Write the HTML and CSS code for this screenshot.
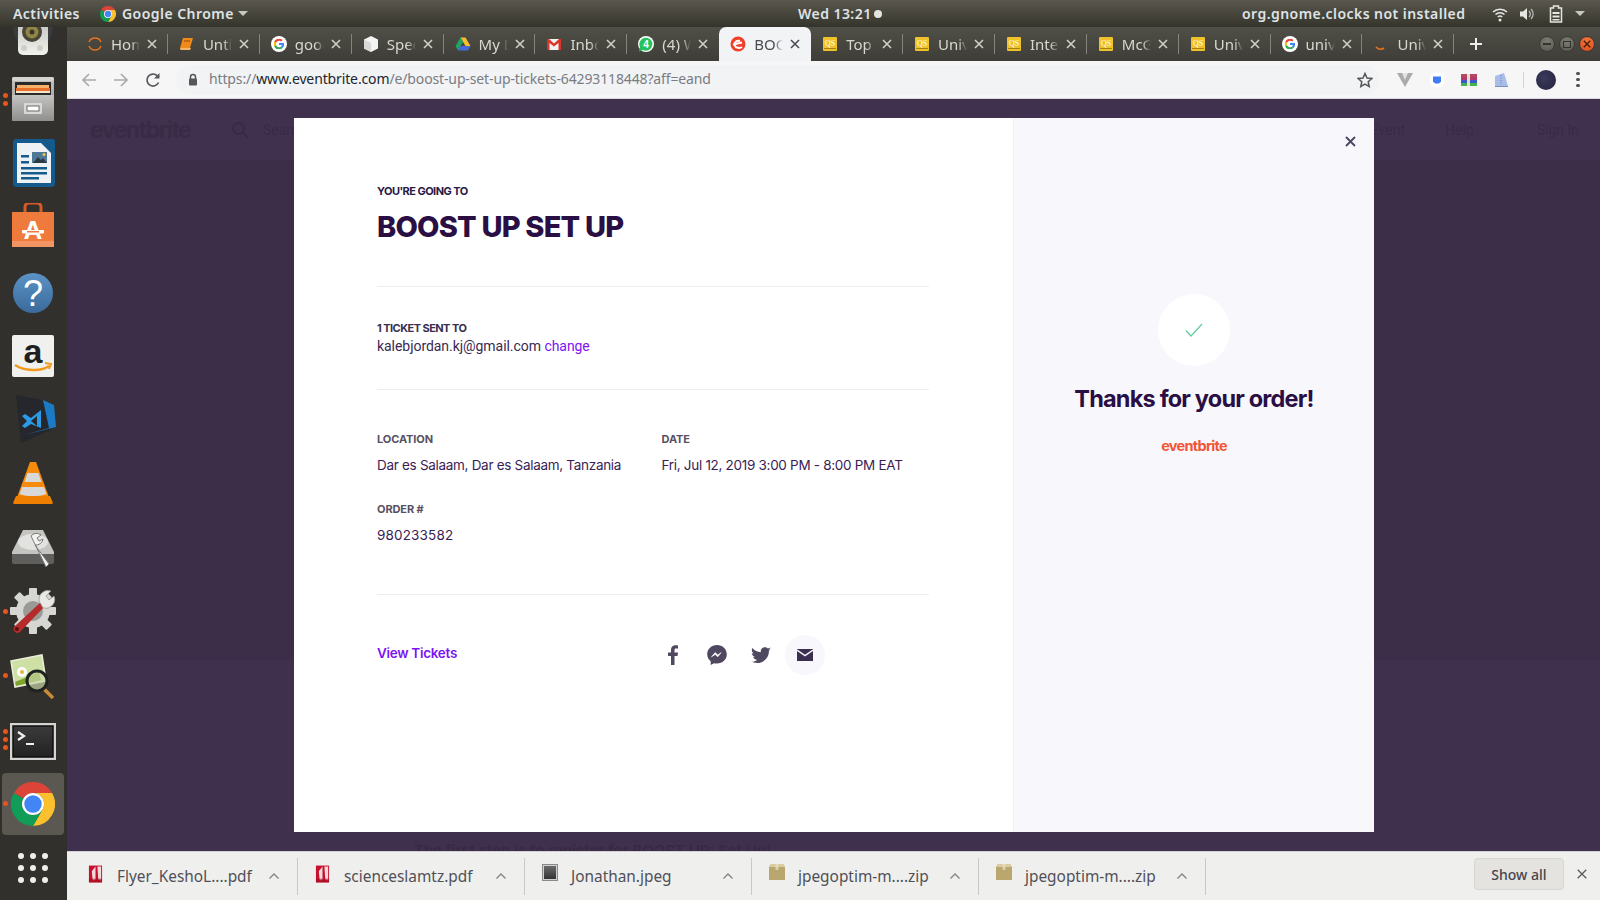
FILE: index.html
```html
<!DOCTYPE html>
<html lang="en">
<head>
<meta charset="utf-8">
<title>BOOST UP SET UP</title>
<link rel="stylesheet" href="styles.css">
</head>
<body>
<svg class="defs" width="0" height="0" aria-hidden="true">
  <defs>
    <linearGradient id="gray" x1="0" y1="0" x2="0" y2="1"><stop offset="0" stop-color="#c4c4c2"/><stop offset="1" stop-color="#8f8f8d"/></linearGradient>
    <linearGradient id="blue" x1="0" y1="0" x2="0" y2="1"><stop offset="0" stop-color="#5b93c6"/><stop offset="1" stop-color="#3a6a9b"/></linearGradient>
    <linearGradient id="spk" x1="0" y1="0" x2="0" y2="1"><stop offset="0" stop-color="#a9a9a4"/><stop offset="1" stop-color="#f2f2ef"/></linearGradient>
    <linearGradient id="term" x1="0" y1="0" x2="0" y2="1"><stop offset="0" stop-color="#3b3b3b"/><stop offset="1" stop-color="#222"/></linearGradient>
  </defs>
  <symbol id="g" viewBox="0 0 48 48">
    <path fill="#EA4335" d="M24 9.5c3.54 0 6.71 1.22 9.21 3.6l6.85-6.85C35.9 2.38 30.47 0 24 0 14.62 0 6.51 5.38 2.56 13.22l7.98 6.19C12.43 13.72 17.74 9.5 24 9.5z"/>
    <path fill="#4285F4" d="M46.98 24.55c0-1.57-.15-3.09-.38-4.55H24v9.02h12.94c-.58 2.96-2.26 5.48-4.78 7.18l7.73 6c4.51-4.18 7.09-10.36 7.09-17.65z"/>
    <path fill="#FBBC05" d="M10.53 28.59c-.48-1.45-.76-2.99-.76-4.59s.27-3.14.76-4.59l-7.98-6.19C.92 16.46 0 20.12 0 24c0 3.88.92 7.54 2.56 10.78l7.97-6.19z"/>
    <path fill="#34A853" d="M24 48c6.48 0 11.93-2.13 15.89-5.81l-7.73-6c-2.15 1.45-4.92 2.3-8.16 2.3-6.26 0-11.57-4.22-13.47-9.91l-7.98 6.19C6.51 42.62 14.62 48 24 48z"/>
  </symbol>
  <symbol id="gfav" viewBox="0 0 18 18">
    <circle cx="9" cy="9" r="9" fill="#fff"/>
    <use href="#g" x="3" y="3" width="12" height="12"/>
  </symbol>
  <symbol id="chrome" viewBox="0 0 48 48">
    <path fill="#DB4437" d="M3.2 12A24 24 0 0 1 44.8 12H24A12 12 0 0 0 13.6 18Z"/>
    <path fill="#FBC02D" d="M44.8 12A24 24 0 0 1 24 48L34.4 30A12 12 0 0 0 24 12Z"/>
    <path fill="#0F9D58" d="M24 48A24 24 0 0 1 3.2 12L13.6 18A12 12 0 0 0 34.4 30Z"/>
    <circle cx="24" cy="24" r="12" fill="#fff"/>
    <circle cx="24" cy="24" r="9.5" fill="#4285F4"/>
  </symbol>
  <symbol id="pdf" viewBox="0 0 16 20">
    <path fill="#c8102e" d="M1 1h14v18H1z"/>
    <path fill="#f3d9dc" d="M8 2 4 7l1 10 3-1zM10 2h4v15l-3-1z"/>
    <path fill="#a00c25" d="M1 15h14v4H1z" opacity=".6"/>
  </symbol>
  <symbol id="box" viewBox="0 0 16 16">
    <path fill="#b9a76f" d="M0 3 2 0h12l2 3v13H0z"/>
    <path fill="#d9cca0" d="M0 3 2 0h12l2 3z"/>
    <path fill="#e8dfc0" d="M6.500 0h3v6h-3z" opacity=".7"/>
  </symbol>
  <symbol id="qs" viewBox="0 0 16 16">
    <rect x="1" y="1" width="14" height="14" rx="1" fill="#efc12b"/>
    <rect x="2" y="12" width="12" height="1" fill="#a9820c"/>
    <text x="8" y="9.500" font-family="Liberation Serif" font-size="8" fill="#fff" text-anchor="middle">QS</text>
  </symbol>
  <symbol id="caret" viewBox="0 0 12 8">
    <path d="M1.500 6.500 6 2l4.500 4.500" fill="none" stroke="#85858a" stroke-width="1.400"/>
  </symbol>
  <symbol id="tabx" viewBox="0 0 10 10">
    <path d="M1 1l8 8M9 1 1 9" fill="none" stroke="currentColor" stroke-width="1.600"/>
  </symbol>
</svg>

<header class="topbar">
  <span class="tb-activities">Activities</span>
  <span class="tb-app">
    <svg class="tb-chrome" width="16" height="16"><use href="#chrome"/></svg>
    Google Chrome
    <span class="tb-caret"></span>
  </span>
  <span class="tb-clock">Wed 13:21<span class="tb-dot"></span></span>
  <span class="tb-status">org.gnome.clocks not installed</span>
  <span class="tb-tray">
    <svg width="16" height="16" viewBox="0 0 16 16"><path d="M1 6a10 10 0 0 1 14 0M3.500 8.500a6.500 6.500 0 0 1 9 0M5.800 11a3.200 3.200 0 0 1 4.400 0" fill="none" stroke="#e6e6e2" stroke-width="1.500"/><circle cx="8" cy="14" r="1.500" fill="#e6e6e2"/></svg>
    <svg width="16" height="16" viewBox="0 0 16 16"><path d="M1 5.500h3L8 2v12L4 10.500H1z" fill="#e6e6e2"/><path d="M10 5a4 4 0 0 1 0 6M12 3a7 7 0 0 1 0 10" fill="none" stroke="#b9b9b4" stroke-width="1.300"/></svg>
    <svg class="tb-batt" width="14" height="18" viewBox="0 0 14 18"><path d="M4.500 1h5v2h3v14h-11V3h3z" fill="none" stroke="#e6e6e2" stroke-width="1.500"/><path d="M3.500 7h7v2h-7zM3.500 10.500h7v2h-7zM3.500 14h7v1.500h-7z" fill="#e6e6e2"/></svg>
    <span class="tb-caret"></span>
  </span>
</header>

<div class="desktop">
  <nav class="dock">
    <div class="dock-item">
      <svg width="48" height="48" viewBox="0 0 48 48"><path d="M3 6c0 16 5 32 21 36 16-4 21-20 21-36z" fill="#3c4044" opacity=".7"/><rect x="9" y="-8" width="30" height="52" rx="5" fill="url(#spk)"/><circle cx="23" cy="21" r="10" fill="#4a4636"/><circle cx="23" cy="21" r="6.500" fill="#8f8548"/><circle cx="23" cy="21" r="2.500" fill="#3a3728"/><circle cx="15" cy="37" r="3" fill="#cfcfca"/><circle cx="31" cy="37" r="3" fill="#cfcfca"/></svg>
    </div>
    <div class="dock-item">
      <span class="run"><i></i><i></i></span>
      <svg width="48" height="48" viewBox="0 0 48 48"><rect x="3" y="2" width="42" height="44" rx="2" fill="url(#gray)"/><rect x="3" y="2" width="42" height="4" rx="2" fill="#d4d4d2"/><rect x="6" y="7" width="36" height="14" fill="#2a2a2a"/><rect x="8" y="10" width="32" height="3" fill="#f6b26b"/><rect x="7" y="13" width="34" height="3" fill="#e8702a"/><rect x="7" y="16" width="34" height="2" fill="#f3e3c8"/><rect x="3" y="20" width="42" height="26" rx="1" fill="url(#gray)"/><rect x="15" y="28" width="18" height="11" rx="1" fill="#d9d9d7"/><rect x="18" y="31" width="12" height="5" fill="#fff" stroke="#6a6a6a"/></svg>
    </div>
    <div class="dock-item">
      <svg width="48" height="48" viewBox="0 0 48 48"><path d="M6 0h28l12 12v32a4 4 0 0 1-4 4H8a4 4 0 0 1-4-4V2z" fill="#155a8c"/><path d="M8 4h24l10 10v30H8z" fill="#eef2f5"/><path d="M34 0h10a2 2 0 0 1 2 2v10z" fill="#155a8c"/><path d="M12 16h8v2.500h-8zM12 22h8v2.500h-8zM12 28h26v2.500H12zM12 33h26v2.500H12zM12 38h18v2.500H12z" fill="#155a8c"/><rect x="23" y="13" width="15" height="11" fill="#4d7896"/><path d="M24 24l5-6 3 3 2-2 4 5z" fill="#2c3a44"/><circle cx="35" cy="15.500" r="1.500" fill="#f2c44b"/></svg>
    </div>
    <div class="dock-item">
      <svg width="48" height="48" viewBox="0 2 48 48"><path d="M16 12V6a4 4 0 0 1 4-4h8a4 4 0 0 1 4 4v6" fill="none" stroke="#d9592a" stroke-width="3"/><path d="M3 11h42v35H3z" fill="#ee7b3c"/><path d="M3 40h42v6H3z" fill="#f19563"/><text x="24" y="38" font-family="Liberation Sans" font-size="26" font-weight="700" fill="#fff" text-anchor="middle">A</text><rect x="13" y="29" width="22" height="3.500" rx="1" fill="#fff"/><rect x="18" y="30" width="12" height="1.500" fill="#ee7b3c"/></svg>
    </div>
    <div class="dock-item">
      <svg width="48" height="48" viewBox="0 -2 48 48"><circle cx="24" cy="24" r="20" fill="url(#blue)"/><text x="24" y="37" font-family="Liberation Sans" font-size="36" fill="#fff" text-anchor="middle">?</text></svg>
    </div>
    <div class="dock-item">
      <svg width="48" height="48" viewBox="0 -1 48 48"><rect x="3" y="3" width="42" height="42" rx="2" fill="#f0f0ee"/><text x="24" y="31" font-family="Liberation Sans" font-size="34" font-weight="700" fill="#1f1f1f" text-anchor="middle">a</text><path d="M6 33c9 6 26 7 34 1" fill="none" stroke="#f19a1d" stroke-width="2.500"/><path d="M36 31l6 1-2 5" fill="none" stroke="#f19a1d" stroke-width="2"/></svg>
    </div>
    <div class="dock-item">
      <svg width="48" height="48" viewBox="0 -2 48 48"><path d="M7-2 35 3l7 30-30 13z" fill="#26272c"/><path d="M34 3l11 5 2 22-32 8 25-7z" fill="#1a7ac6"/><path d="M32 13 22 21l-6-4-3 2 5 5-5 5 3 2 6-4 10 4zM28 19v10l-6-5z" fill="#2b9be8" fill-rule="evenodd"/></svg>
    </div>
    <div class="dock-item">
      <svg width="48" height="48" viewBox="0 -1 48 48"><path d="M21 2h6l14 38H7z" fill="#f58a0b"/><path d="M18.500 13h11l3 9h-17z" fill="#d8d8d8"/><path d="M13 27h22l2.500 7c-8 3-19 3-27 0z" fill="#d8d8d8"/><path d="M7 36h34l3 7a2 2 0 0 1-2 1H6a2 2 0 0 1-2-1z" fill="#ef7f00"/></svg>
    </div>
    <div class="dock-item">
      <svg width="48" height="48" viewBox="0 -1 48 48"><path d="M14 6h20l11 22v10H3V28z" fill="#c4c4c1"/><ellipse cx="24" cy="18" rx="15" ry="8" fill="#e2e2e0"/><path d="M3 30h42v8a2 2 0 0 1-2 2H5a2 2 0 0 1-2-2z" fill="#5f5f5d"/><path d="M22 12a7 7 0 0 1 10-1l-4 3 2 3 4-2a7 7 0 0 1-8 6l14 19-3 3z" fill="#f2f2f0" stroke="#7a7a78"/></svg>
    </div>
    <div class="dock-item">
      <span class="run"><i></i></span>
      <svg width="48" height="48" viewBox="0 0 48 48"><g fill="#d6d6d2"><circle cx="24" cy="24" r="17"/><rect x="20" y="1" width="8" height="46" rx="1"/><rect x="1" y="20" width="46" height="8" rx="1"/><rect x="20" y="1" width="8" height="46" rx="1" transform="rotate(45 24 24)"/><rect x="20" y="1" width="8" height="46" rx="1" transform="rotate(-45 24 24)"/></g><circle cx="24" cy="24" r="10" fill="#9a9a97"/><path d="M5 40 32 15l4 4L11 45a4 4 0 0 1-6-5z" fill="#b52a2a"/><circle cx="8" cy="42" r="2" fill="#5b1010"/><path d="M30 14a9 9 0 0 1 12-10l-5 5 3 4 5-4a9 9 0 0 1-11 12z" fill="#e9e9e6" stroke="#8a8a88" stroke-width=".7"/></svg>
    </div>
    <div class="dock-item">
      <span class="run"><i></i></span>
      <svg width="48" height="48" viewBox="0 -1 48 48"><path d="M2 9 33 3l4 26-31 6z" fill="#cfe0a4" stroke="#e8eedb" stroke-width="1.500"/><circle cx="13" cy="20" r="5" fill="#fff"/><circle cx="13" cy="20" r="2" fill="#e3b33a"/><path d="M6 30l24-10 2 8-25 6z" fill="#7fa32f"/><path d="M34 36l10 10" stroke="#c98a3a" stroke-width="3.500"/><circle cx="28" cy="29" r="10" fill="#c9d6a8" fill-opacity=".7" stroke="#1f2320" stroke-width="3"/></svg>
    </div>
    <div class="dock-item">
      <span class="run"><i></i><i></i><i></i></span>
      <svg width="48" height="48" viewBox="0 -3 48 48"><rect x="1" y="5" width="46" height="37" fill="#d4d4d2"/><rect x="4" y="8" width="40" height="31" fill="url(#term)" stroke="#0e0e0e" stroke-width="1.500"/><path d="M9 14l6 4-6 4" fill="none" stroke="#f0f0f0" stroke-width="2.200"/><path d="M17 25h8v2h-8z" fill="#f0f0f0"/></svg>
    </div>
    <div class="dock-item is-active">
      <span class="run"><i></i></span>
      <svg width="44" height="44"><use href="#chrome"/></svg>
    </div>
    <div class="dock-grid"><i></i><i></i><i></i><i></i><i></i><i></i><i></i><i></i><i></i></div>
  </nav>

  <main class="window">
    <div class="tabstrip">
      <div class="tab">
        <svg class="fav" viewBox="0 0 16 16"><path d="M2 6a6.500 6.500 0 0 1 12 0M2 10a6.500 6.500 0 0 0 12 0" fill="none" stroke="#e8731a" stroke-width="1.500"/></svg>
        <span class="tab-t">Home</span><svg class="tab-x"><use href="#tabx"/></svg>
      </div>
      <div class="tab">
        <svg class="fav" viewBox="0 0 16 16"><path d="M4 2h10l-3 10H1z" fill="#f08a1a"/><path d="M1 12c0 2 1 2 2 2h8l1-2z" fill="#f7b36a"/><path d="M5 5h6" stroke="#8f4a08"/></svg>
        <span class="tab-t">Untitled</span><svg class="tab-x"><use href="#tabx"/></svg>
      </div>
      <div class="tab">
        <svg class="fav"><use href="#gfav"/></svg>
        <span class="tab-t">google</span><svg class="tab-x"><use href="#tabx"/></svg>
      </div>
      <div class="tab">
        <svg class="fav" viewBox="0 0 16 16"><path d="M8 0l7 3.500v9L8 16l-7-3.500v-9z" fill="#f4f4f2"/><path d="M8 7 1 3.500v9L8 16z" fill="#d8d8d4"/></svg>
        <span class="tab-t">Speed</span><svg class="tab-x"><use href="#tabx"/></svg>
      </div>
      <div class="tab">
        <svg class="fav" viewBox="0 0 16 16"><path d="M5.500 1.500h5L15.500 10h-5z" fill="#f6c02c"/><path d="M5.500 1.500 0.500 10l2.500 4.500L8 6z" fill="#1fa463"/><path d="M3 14.500h10l2.500-4.500H5.500z" fill="#4a69d8"/></svg>
        <span class="tab-t">My Drive</span><svg class="tab-x"><use href="#tabx"/></svg>
      </div>
      <div class="tab">
        <svg class="fav" viewBox="0 0 16 16"><rect x="1" y="3" width="14" height="11" fill="#f2f2f0"/><path d="M1 3h2l5 4.500L13 3h2v11h-2.500V7L8 10.500 3.500 7v7H1z" fill="#d9362b"/></svg>
        <span class="tab-t">Inbox</span><svg class="tab-x"><use href="#tabx"/></svg>
      </div>
      <div class="tab">
        <svg class="fav" viewBox="0 0 16 16"><circle cx="8" cy="8" r="8" fill="#fff"/><path d="M1 15.500 2 11a6.500 6.500 0 1 1 3 3z" fill="#25c25f"/><text x="8" y="11.500" font-family="Liberation Sans" font-size="10" font-weight="700" fill="#fff" text-anchor="middle">4</text></svg>
        <span class="tab-t">(4) WhatsApp</span><svg class="tab-x"><use href="#tabx"/></svg>
      </div>
      <div class="tab is-active">
        <svg class="fav" viewBox="0 0 16 16"><circle cx="8" cy="8" r="7.500" fill="#f1402a"/><path d="M3 8.500 12 6.500M12 11c-2 1.500-6.500 1.300-7.500-2C4 6 7 4 10 5" fill="none" stroke="#fff" stroke-width="2"/></svg>
        <span class="tab-t">BOOST</span><svg class="tab-x"><use href="#tabx"/></svg>
      </div>
      <div class="tab"><svg class="fav"><use href="#qs"/></svg><span class="tab-t">Top</span><svg class="tab-x"><use href="#tabx"/></svg></div>
      <div class="tab"><svg class="fav"><use href="#qs"/></svg><span class="tab-t">University</span><svg class="tab-x"><use href="#tabx"/></svg></div>
      <div class="tab"><svg class="fav"><use href="#qs"/></svg><span class="tab-t">International</span><svg class="tab-x"><use href="#tabx"/></svg></div>
      <div class="tab"><svg class="fav"><use href="#qs"/></svg><span class="tab-t">McGill</span><svg class="tab-x"><use href="#tabx"/></svg></div>
      <div class="tab"><svg class="fav"><use href="#qs"/></svg><span class="tab-t">University</span><svg class="tab-x"><use href="#tabx"/></svg></div>
      <div class="tab"><svg class="fav"><use href="#gfav"/></svg><span class="tab-t">university</span><svg class="tab-x"><use href="#tabx"/></svg></div>
      <div class="tab">
        <svg class="fav" viewBox="0 0 16 16"><path d="M3 11a6 6 0 0 0 8 1" fill="none" stroke="#e8731a" stroke-width="1.800"/></svg>
        <span class="tab-t">University</span><svg class="tab-x"><use href="#tabx"/></svg>
      </div>
      <svg class="newtab" width="14" height="14" viewBox="0 0 14 14"><path d="M7 1v12M1 7h12" stroke="#eeeeea" stroke-width="2"/></svg>
      <div class="winbtns">
        <span class="winbtn"><i class="wb-min"></i></span>
        <span class="winbtn"><i class="wb-max"></i></span>
        <span class="winbtn is-close"><svg width="8" height="8" viewBox="0 0 10 10"><path d="M1 1l8 8M9 1 1 9" stroke="#4a1d08" stroke-width="1.800"/></svg></span>
      </div>
    </div>

    <div class="toolbar">
      <svg class="tbi" width="16" height="16" viewBox="0 0 16 16"><path d="M15 8H2M8 2 2 8l6 6" fill="none" stroke="#a9abae" stroke-width="1.700"/></svg>
      <svg class="tbi" width="16" height="16" viewBox="0 0 16 16"><path d="M1 8h13M8 2l6 6-6 6" fill="none" stroke="#a9abae" stroke-width="1.700"/></svg>
      <svg class="tbi" width="16" height="16" viewBox="0 0 16 16"><path d="M13.500 10.500A6 6 0 1 1 12.300 3.800" fill="none" stroke="#55575b" stroke-width="1.700"/><path d="M14.500 1v5.500H9z" fill="#55575b"/></svg>
      <div class="omnibox">
        <svg width="10" height="13" viewBox="0 0 10 13"><path d="M2.500 6V4a2.500 2.500 0 0 1 5 0v2" fill="none" stroke="#55575b" stroke-width="1.500"/><rect x="1" y="5.500" width="8" height="7" rx="1" fill="#55575b"/></svg>
        <span class="url">https://<b>www.eventbrite.com</b>/e/boost-up-set-up-tickets-64293118448?aff=eand</span>
        <svg class="star" width="16" height="16" viewBox="0 0 16 16"><path d="M8 1.500l2 4.500 4.800.5-3.600 3.200 1 4.800L8 12.100l-4.200 2.400 1-4.800L1.200 6.500 6 6z" fill="none" stroke="#55575b" stroke-width="1.500"/></svg>
      </div>
      <div class="exts">
        <svg width="16" height="16" viewBox="0 0 16 16"><path d="M0 1h16L8 15z" fill="#a9abac"/><path d="M5 1h6L8 8z" fill="#e3e3e3"/></svg>
        <svg width="16" height="16" viewBox="0 0 16 16"><circle cx="8" cy="8" r="7.500" fill="#fff"/><path d="M4 4.500h8v5l-2 2H6l-2-2z" fill="#3f7cf5"/></svg>
        <svg width="16" height="16" viewBox="0 0 16 16"><rect x="0" y="2" width="16" height="3" fill="#b44b5c"/><rect x="0" y="5" width="16" height="3" fill="#b23a6e"/><rect x="0" y="8" width="16" height="3" fill="#3d58c9"/><rect x="0" y="11" width="16" height="3" fill="#45b04f"/><rect x="6" y="2" width="3" height="12" fill="#e6e0d0"/></svg>
        <svg width="16" height="16" viewBox="0 0 16 16"><path d="M2 4l9-3 4 13H2z" fill="#a9bde8"/><path d="M2 14h13v1H2z" fill="#7d8fbf"/><path d="M8 3v9" stroke="#5d74c8" stroke-dasharray="1 1.500"/></svg>
        <span class="tool-sep"></span>
        <span class="avatar"></span>
        <span class="kebab"><i></i><i></i><i></i></span>
      </div>
    </div>

    <div class="page">
      <div class="eb-nav">
        <span class="eb-logo">eventbrite</span>
        <svg class="eb-search" width="18" height="18" viewBox="0 0 18 18"><circle cx="7.500" cy="7.500" r="5.500" fill="none" stroke="#382a48" stroke-width="2"/><path d="M11.500 11.500 17 17" stroke="#382a48" stroke-width="2"/></svg>
        <span class="eb-link">Search events</span>
        <span class="eb-link eb-push">Create Event</span>
        <span class="eb-link eb-help">Help</span>
        <span class="eb-link eb-sign">Sign In</span>
      </div>
      <div class="eb-hero"></div>
      <div class="eb-rest">The first step is to register for BOOST UP: Set Up!</div>

      <section class="modal">
        <svg class="modal-x" width="11" height="11" viewBox="0 0 11 11"><path d="M1 1l9 9M10 1l-9 9" stroke="#4b4560" stroke-width="1.800"/></svg>
        <div class="m-main">
          <div class="m-sec m-sec-title">
            <div class="lbl lbl-dark">YOU'RE GOING TO</div>
            <h1 class="m-title">BOOST UP SET UP</h1>
          </div>
          <div class="m-sec m-sec-sent">
            <div class="lbl lbl-mid">1 TICKET SENT TO</div>
            <div class="m-email">kalebjordan.kj@gmail.com <a class="link">change</a></div>
          </div>
          <div class="m-sec m-sec-info">
            <div class="info-grid">
              <div>
                <div class="lbl lbl-soft">LOCATION</div>
                <div class="val">Dar es Salaam, Dar es Salaam, Tanzania</div>
              </div>
              <div>
                <div class="lbl lbl-soft">DATE</div>
                <div class="val">Fri, Jul 12, 2019 3:00 PM - 8:00 PM EAT</div>
              </div>
              <div class="info-order">
                <div class="lbl lbl-soft">ORDER #</div>
                <div class="val val-num">980233582</div>
              </div>
            </div>
          </div>
          <div class="m-actions">
            <a class="view-link">View Tickets</a>
            <div class="share">
              <span class="share-btn"><svg width="12" height="20" viewBox="0 0 12 20"><path d="M7.500 20v-9h3l.5-3.500H7.500V5.300c0-1 .3-1.700 1.700-1.700H11V.5C10.700.4 9.600.3 8.400.3 5.800.3 4 1.900 4 4.800v2.700H1V11h3v9z" fill="#4f4860"/></svg></span>
              <span class="share-btn"><svg width="20" height="20" viewBox="0 0 20 20"><path d="M10 0C4.500 0 .2 4 .2 9.200c0 2.900 1.300 5.300 3.500 7V20l3.300-1.800c.9.300 2 .4 3 .4 5.500 0 9.800-4.100 9.800-9.300S15.500 0 10 0z" fill="#4f4860"/><path d="m4.500 11.800 3.700-4.200 2.600 2.400 3.400-2.400-3.400 4.200-2.600-2.400z" fill="#fff" stroke="#fff" stroke-width=".6"/></svg></span>
              <span class="share-btn"><svg width="20" height="17" viewBox="0 0 24 20"><path d="M24 2.400c-.9.400-1.800.7-2.800.8 1-.6 1.800-1.600 2.200-2.700-1 .6-2 1-3.100 1.200C19.300.6 18 0 16.600 0c-2.700 0-4.900 2.200-4.900 4.900 0 .4 0 .8.100 1.100C7.700 5.800 4.100 3.800 1.700.9c-.4.700-.7 1.600-.7 2.500 0 1.700.9 3.200 2.200 4.100-.8 0-1.600-.2-2.200-.6v.1c0 2.400 1.700 4.400 3.900 4.800-.4.100-.8.200-1.300.2-.3 0-.6 0-.9-.1.600 2 2.400 3.400 4.600 3.400-1.700 1.300-3.800 2.100-6.100 2.100-.4 0-.8 0-1.200-.1C2.200 18.300 4.800 19 7.500 19c9.100 0 14-7.500 14-14v-.6c1-.7 1.800-1.600 2.500-2z" fill="#4f4860"/></svg></span>
              <span class="share-btn is-on"><svg width="16" height="12" viewBox="0 0 16 12"><path d="M0 0h16v12H0z" fill="#3d2f4f"/><path d="M0 1l8 5.500L16 1" fill="none" stroke="#f8f7fb" stroke-width="1.500"/></svg></span>
            </div>
          </div>
        </div>
        <aside class="m-side">
          <div class="check"><svg width="18" height="14" viewBox="0 0 18 14"><path d="M1 7.500 6 13 17 1" fill="none" stroke="#5fcf9a" stroke-width="1.200"/></svg></div>
          <h2 class="thanks">Thanks for your order!</h2>
          <div class="side-logo">eventbrite</div>
        </aside>
      </section>
    </div>

    <div class="downloads">
      <div class="dl"><svg class="dl-ic" width="15" height="20"><use href="#pdf"/></svg><span class="dl-name">Flyer_KeshoL....pdf</span><svg class="dl-c" width="12" height="8"><use href="#caret"/></svg></div>
      <div class="dl"><svg class="dl-ic" width="15" height="20"><use href="#pdf"/></svg><span class="dl-name">scienceslamtz.pdf</span><svg class="dl-c" width="12" height="8"><use href="#caret"/></svg></div>
      <div class="dl"><span class="dl-ic dl-img"></span><span class="dl-name">Jonathan.jpeg</span><svg class="dl-c" width="12" height="8"><use href="#caret"/></svg></div>
      <div class="dl"><svg class="dl-ic" width="16" height="16"><use href="#box"/></svg><span class="dl-name">jpegoptim-m....zip</span><svg class="dl-c" width="12" height="8"><use href="#caret"/></svg></div>
      <div class="dl"><svg class="dl-ic" width="16" height="16"><use href="#box"/></svg><span class="dl-name">jpegoptim-m....zip</span><svg class="dl-c" width="12" height="8"><use href="#caret"/></svg></div>
      <button class="showall">Show all</button>
      <svg class="dl-close" width="10" height="10" viewBox="0 0 10 10"><path d="M.7.700l8.600 8.600M9.300.7.700 9.300" stroke="#5a5a5e" stroke-width="1.300"/></svg>
    </div>
  </main>
</div>
</body>
</html>
```

FILE: styles.css
```css
* { box-sizing: border-box; }
html, body { margin: 0; height: 100%; }
body {
  width: 1600px;
  height: 900px;
  overflow: hidden;
  display: flex;
  flex-direction: column;
  font-family: "Noto Sans", "Liberation Sans", sans-serif;
  background: #32302c;
}
.defs { position: absolute; }
h1, h2 { margin: 0; }

/* GNOME top bar */
.topbar {
  height: 27px;
  flex: none;
  display: flex;
  align-items: center;
  background: linear-gradient(#59574e, #39382f 90%, #33322c);
  color: #dfe3e6;
  font-size: 14px;
  font-weight: 600;
  letter-spacing: .45px;
  white-space: nowrap;
}
.tb-activities { margin-left: 13px; width: 87px; }
.tb-app { display: flex; align-items: center; width: 698px; }
.tb-chrome { margin-right: 6px; }
.tb-caret {
  width: 0; height: 0; margin-left: 4px;
  border-left: 5px solid transparent;
  border-right: 5px solid transparent;
  border-top: 5px solid #c9c9c4;
}
.tb-clock { display: flex; align-items: center; width: 444px; }
.tb-dot { width: 8px; height: 8px; margin-left: 2px; border-radius: 50%; background: #e4e4e0; }
.tb-status { width: 250px; }
.tb-tray { display: flex; align-items: center; gap: 11px; }
.tb-batt { margin-left: 3px; }
.tb-tray .tb-caret { margin-left: 1px; }

.desktop { flex: 1; min-height: 0; display: flex; }

/* Dock */
.dock {
  width: 67px;
  flex: none;
  background: #32302c;
  overflow: hidden;
  display: flex;
  flex-direction: column;
}
.dock-item {
  position: relative;
  flex: none;
  height: 64px;
  padding-right: 2px;
  display: flex;
  align-items: center;
  justify-content: center;
}
.dock-item:first-child { margin-top: -24px; }
.dock-item.is-active::before {
  content: "";
  position: absolute;
  left: 2px; right: 3px; top: 2px; bottom: 0;
  background: #5b5852;
  border-radius: 4px;
}
.dock-item svg { position: relative; }
.dock-item.is-active svg { margin-top: 2px; }
.run {
  position: absolute;
  z-index: 1;
  left: 3px; top: 0; bottom: 0;
  display: flex;
  flex-direction: column;
  justify-content: center;
  gap: 3px;
}
.run i { display: block; width: 5px; height: 5px; border-radius: 50%; background: #e9541d; }
.dock-grid {
  display: grid;
  grid-template-columns: repeat(3, 6px);
  gap: 6px;
  justify-content: center;
  margin-top: 18px;
  padding-right: 2px;
}
.dock-grid i { width: 6px; height: 6px; border-radius: 50%; background: #eeeeea; }

/* Chrome window */
.window { flex: 1; min-width: 0; display: flex; flex-direction: column; }
.tabstrip {
  height: 34px;
  flex: none;
  display: flex;
  align-items: stretch;
  padding-left: 9px;
  background: linear-gradient(#504f47, #3e3d37);
}
.tab {
  position: relative;
  width: 91.900px;
  flex: none;
  display: flex;
  align-items: center;
  padding-bottom: 1px;
  color: #d8d7d1;
  font-size: 15px;
}
.tab::after {
  content: "";
  position: absolute;
  right: 0; top: 7px; bottom: 7px;
  width: 1px;
  background: #85847b;
}
.tab:has(+ .is-active)::after { display: none; }
.tab.is-active {
  background: #f2f3f5;
  color: #4a4a55;
  border-radius: 7px 7px 0 0;
}
.tab.is-active::after { display: none; }
.fav { width: 16px; height: 16px; margin-left: 11px; flex: none; }
.tab-t {
  margin-left: 8px;
  width: 29px;
  overflow: hidden;
  white-space: nowrap;
  -webkit-mask-image: linear-gradient(90deg, #000 70%, transparent);
  mask-image: linear-gradient(90deg, #000 70%, transparent);
}
.tab-x { width: 10px; height: 10px; margin-left: 7px; flex: none; color: #d0cfc9; }
.is-active .tab-x { color: #4a4a50; }
.newtab { align-self: center; margin-left: 15px; }
.winbtns { display: flex; align-items: center; gap: 4px; margin-left: auto; padding-right: 5px; }
.winbtn {
  width: 16px; height: 16px;
  border-radius: 50%;
  background: radial-gradient(circle at 50% 30%, #7d7c74, #58574f);
  border: 1px solid #3a3934;
  display: flex;
  align-items: center;
  justify-content: center;
}
.winbtn.is-close { background: radial-gradient(circle at 50% 30%, #f07a3c, #d8481a); }
.wb-min { width: 8px; height: 1.500px; background: #33322d; }
.wb-max { width: 8px; height: 7px; border: 1px solid #33322d; }

.toolbar {
  height: 38px;
  flex: none;
  display: flex;
  align-items: center;
  padding-left: 14px;
  gap: 16px;
  background: #f6f6f6;
  border-bottom: 1px solid #d8d8d8;
  position: relative;
}
.omnibox {
  width: 1203px;
  height: 30px;
  margin-left: -1px;
  padding: 0 6px 0 12px;
  display: flex;
  align-items: center;
  border-radius: 15px;
  background: #f1f3f4;
}
.url {
  margin-left: 11px;
  padding-bottom: 2px;
  font-size: 14px;
  letter-spacing: -.13px;
  color: #7a7c84;
  white-space: nowrap;
}
.url b { font-weight: 400; color: #24252b; }
.star { margin-left: auto; }
.exts { display: flex; align-items: center; gap: 16px; margin-left: 2px; }
.tool-sep { width: 1px; height: 16px; background: #d4d4d4; margin: 0 -2px; }
.avatar {
  width: 20px; height: 20px;
  margin-left: -2px;
  border-radius: 50%;
  background: radial-gradient(circle at 40% 40%, #3b3a5c, #23223c);
}
.kebab { display: flex; flex-direction: column; gap: 2.500px; margin-left: 4px; }
.kebab i { width: 3.500px; height: 3.500px; border-radius: 50%; background: #4f5156; }

/* Dimmed page */
.page {
  position: relative;
  flex: 1;
  min-height: 0;
  overflow: hidden;
  background: #3f314d;
  color: #38293f;
}
.eb-nav {
  height: 61px;
  display: flex;
  align-items: center;
  padding-left: 23px;
  background: #40324f;
  font-family: Roboto, sans-serif;
  font-size: 14px;
  color: #382a48;
}
.eb-logo {
  width: 141px;
  font-family: Inter, sans-serif;
  font-size: 23px;
  font-weight: 700;
  letter-spacing: -1.500px;
  color: #3a2a46;
}
.eb-search { margin-right: 14px; }
.eb-push { margin-left: auto; }
.eb-help { margin-left: 40px; }
.eb-sign { margin-left: 63px; margin-right: 21px; }
.eb-hero { height: 500px; background: #3c2e49; }
.eb-rest {
  padding: 181px 0 0 347px;
  font-family: Inter, sans-serif;
  font-size: 15px;
  font-weight: 600;
  white-space: nowrap;
  color: #372a43;
}

/* Modal */
.modal {
  position: absolute;
  left: 227px;
  top: 19px;
  width: 1080px;
  height: 714px;
  display: flex;
  background: #fff;
  color: #2a0f45;
}
.modal-x { position: absolute; right: 18px; top: 18px; }
.m-main { width: 719px; flex: none; padding: 66px 84px 0 83px; }
.m-sec { border-bottom: 1px solid #eeedf2; }
.m-sec-title { padding-bottom: 41px; }
.m-sec-sent { padding: 34px 0 33px; }
.m-sec-info { padding: 42px 0 49px; }
.lbl {
  font-family: Inter, sans-serif;
  font-size: 11px;
  line-height: 14px;
  font-weight: 700;
  white-space: nowrap;
}
.lbl-dark { color: #2a1a45; letter-spacing: -.55px; }
.lbl-mid { color: #39304f; letter-spacing: -.55px; }
.lbl-soft { color: #585163; letter-spacing: -.1px; }
.m-title {
  margin-top: 11px;
  font-family: Inter, sans-serif;
  font-size: 29px;
  line-height: 36px;
  font-weight: 800;
  letter-spacing: -.8px;
  white-space: nowrap;
}
.m-email {
  margin-top: 1px;
  font-family: Roboto, sans-serif;
  font-size: 14px;
  line-height: 20px;
  letter-spacing: -.05px;
  color: #3a2a52;
}
.link { color: #7b14f5; }
.info-grid { display: grid; grid-template-columns: 284.500px 1fr; row-gap: 27px; }
.info-order { grid-column: 1; }
.val {
  margin-top: 9px;
  font-family: Inter, sans-serif;
  font-size: 13.500px;
  line-height: 20px;
  letter-spacing: -.3px;
  color: #3a1d55;
  white-space: nowrap;
}
.val-num { letter-spacing: .15px; }
.m-actions {
  display: grid;
  grid-template-columns: 284.500px 1fr;
  align-items: center;
  padding-top: 40px;
}
.view-link {
  margin-top: -4px;
  font-family: Inter, sans-serif;
  font-size: 13.500px;
  font-weight: 600;
  letter-spacing: -.3px;
  color: #7b14f5;
}
.share { display: flex; gap: 4px; margin-left: -8.500px; }
.share-btn {
  width: 40px; height: 40px;
  border-radius: 50%;
  display: flex;
  align-items: center;
  justify-content: center;
}
.share-btn.is-on { background: #f8f7fb; }
.m-side {
  flex: 1;
  display: flex;
  flex-direction: column;
  align-items: center;
  padding-top: 176px;
  background: #f8f7fb;
  border-left: 1px solid #f1f0f5;
}
.check {
  width: 72px; height: 72px;
  border-radius: 50%;
  background: #fff;
  display: flex;
  align-items: center;
  justify-content: center;
}
.thanks {
  margin-top: 17px;
  font-family: Inter, sans-serif;
  font-size: 23.500px;
  line-height: 32px;
  font-weight: 700;
  letter-spacing: -.8px;
  white-space: nowrap;
  color: #2a0f45;
}
.side-logo {
  margin-top: 21px;
  font-family: Inter, sans-serif;
  font-size: 14.500px;
  line-height: 20px;
  font-weight: 700;
  letter-spacing: -.7px;
  color: #f05537;
}

/* Download shelf */
.downloads {
  height: 49px;
  flex: none;
  display: flex;
  align-items: center;
  padding-left: 4px;
  background: #efefed;
  border-top: 1px solid #d3d3d6;
  position: relative;
}
.dl {
  position: relative;
  width: 227px;
  height: 37px;
  flex: none;
  display: flex;
  align-items: center;
  border-right: 1px solid #c9c9c6;
  color: #4f4f58;
  font-size: 15.400px;
}
.dl-ic { position: absolute; left: 17px; top: 6px; }
.dl-img {
  width: 16px; height: 17px;
  background: linear-gradient(#6a6a6a, #333);
  border: 2px solid #d0d0d0;
  outline: 1px solid #8a8a8a;
  outline-offset: -1px;
}
.dl-name { margin-left: 46px; white-space: nowrap; }
.dl-c { position: absolute; right: 17px; top: 14px; }
.showall {
  margin-left: auto;
  width: 90px;
  height: 32px;
  border: 1px solid #d6d6d3;
  border-radius: 4px;
  background: #e4e3e0;
  font-family: "Noto Sans", sans-serif;
  font-size: 14px;
  font-weight: 500;
  color: #45454c;
  margin-top: -4px;
}
.dl-close { margin: -4px 13px 0 13px; }
```
